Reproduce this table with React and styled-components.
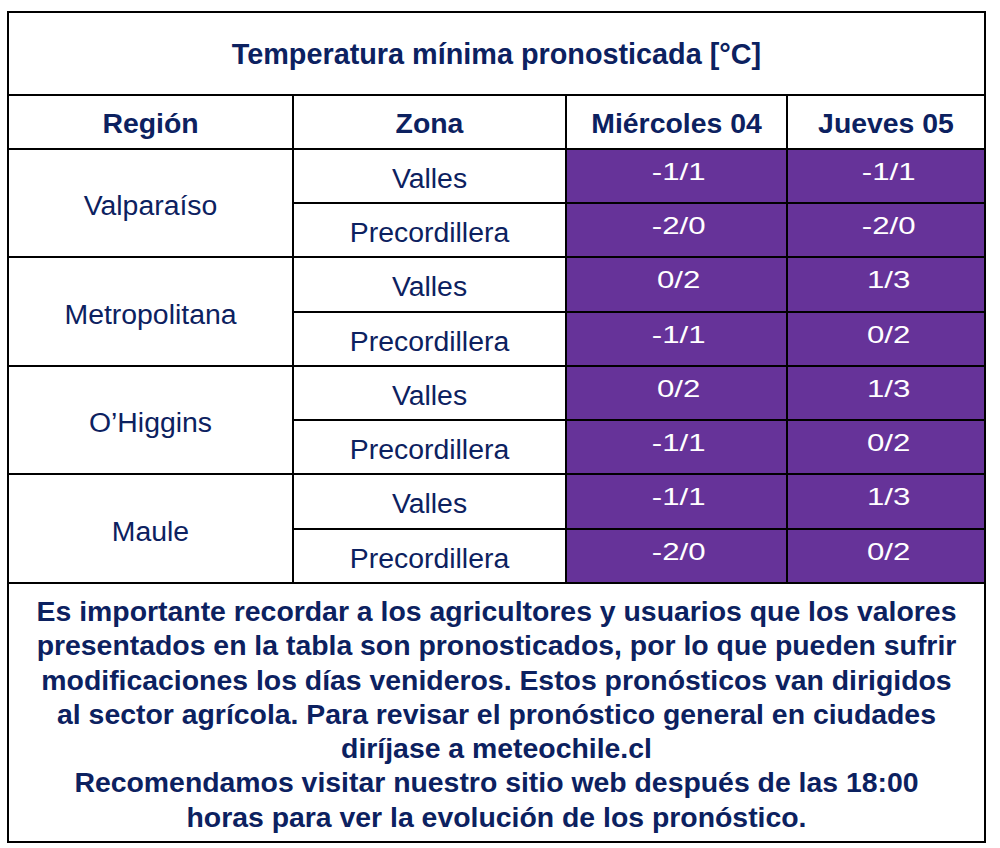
import React from "react";
import styled, { createGlobalStyle } from "styled-components";

const GlobalStyle = createGlobalStyle`
  html, body {
    margin: 0;
    padding: 0;
    background: #ffffff;
  }
  body {
    font-family: "Liberation Sans", Arial, Helvetica, sans-serif;
  }
`;

const NAVY = "#0c2160";
const PURPLE = "#663399";

const Page = styled.div`
  padding: 11px 0 0 7px;
`;

const Grid = styled.div`
  display: grid;
  grid-template-columns: 283px 271px 219px 196px;
  grid-template-rows: 81px 52px 52px 52px 53px 52px 52px 52px 53px 52px 257px;
  gap: 2px;
  padding: 2px;
  background: #000000;
  width: fit-content;
  font-family: "Liberation Sans", Arial, Helvetica, sans-serif;
  font-size: 28.4px;
  color: ${NAVY};
`;

const Cell = styled.div`
  background: #ffffff;
  display: flex;
  align-items: center;
  justify-content: center;
  text-align: center;
  line-height: normal;
  box-sizing: border-box;
  white-space: nowrap;
`;

const TitleCell = styled(Cell)`
  grid-column: 1 / -1;
  font-weight: bold;
  font-size: 28.8px;
  padding-top: 1px;
`;

const HeadCell = styled(Cell)`
  font-weight: bold;
  padding-top: 2px;
`;

const RegionCell = styled(Cell)`
  grid-row: span 2;
  padding-top: 5px;
`;

const ZoneCell = styled(Cell)`
  padding-top: 4px;
`;

const ValueCell = styled(Cell)`
  background: ${PURPLE};
  color: #ffffff;
  font-size: 24px;
  padding-bottom: 9px;
  padding-left: 5px;
`;

const ValueText = styled.span`
  display: inline-block;
  transform: scaleX(1.3);
  transform-origin: 50% 50%;
`;

const NoteCell = styled(Cell)`
  grid-column: 1 / -1;
  align-items: flex-start;
  font-weight: bold;
  line-height: 34.3px;
  padding-top: 10px;
`;

const data = [
  {
    region: "Valparaíso",
    zones: [
      { name: "Valles", values: ["-1/1", "-1/1"] },
      { name: "Precordillera", values: ["-2/0", "-2/0"] },
    ],
  },
  {
    region: "Metropolitana",
    zones: [
      { name: "Valles", values: ["0/2", "1/3"] },
      { name: "Precordillera", values: ["-1/1", "0/2"] },
    ],
  },
  {
    region: "O’Higgins",
    zones: [
      { name: "Valles", values: ["0/2", "1/3"] },
      { name: "Precordillera", values: ["-1/1", "0/2"] },
    ],
  },
  {
    region: "Maule",
    zones: [
      { name: "Valles", values: ["-1/1", "1/3"] },
      { name: "Precordillera", values: ["-2/0", "0/2"] },
    ],
  },
];

const noteLines = [
  "Es importante recordar a los agricultores y usuarios que los valores",
  "presentados en la tabla son pronosticados, por lo que pueden sufrir",
  "modificaciones los días venideros. Estos pronósticos van dirigidos",
  "al sector agrícola. Para revisar el pronóstico general en ciudades",
  "diríjase a meteochile.cl",
  "Recomendamos visitar nuestro sitio web después de las 18:00",
  "horas para ver la evolución de los pronóstico.",
];

export default function App() {
  return (
    <>
      <GlobalStyle />
      <Page>
        <Grid>
          <TitleCell>Temperatura mínima pronosticada [°C]</TitleCell>
          <HeadCell>Región</HeadCell>
          <HeadCell>Zona</HeadCell>
          <HeadCell>Miércoles 04</HeadCell>
          <HeadCell>Jueves 05</HeadCell>
          {data.map((r) =>
            r.zones.map((z, i) => (
              <React.Fragment key={r.region + z.name}>
                {i === 0 && <RegionCell>{r.region}</RegionCell>}
                <ZoneCell>{z.name}</ZoneCell>
                {z.values.map((v, j) => (
                  <ValueCell key={j}>
                    <ValueText>{v}</ValueText>
                  </ValueCell>
                ))}
              </React.Fragment>
            ))
          )}
          <NoteCell>
            <div>
              {noteLines.map((l, i) => (
                <React.Fragment key={i}>
                  {l}
                  {i < noteLines.length - 1 && <br />}
                </React.Fragment>
              ))}
            </div>
          </NoteCell>
        </Grid>
      </Page>
    </>
  );
}
